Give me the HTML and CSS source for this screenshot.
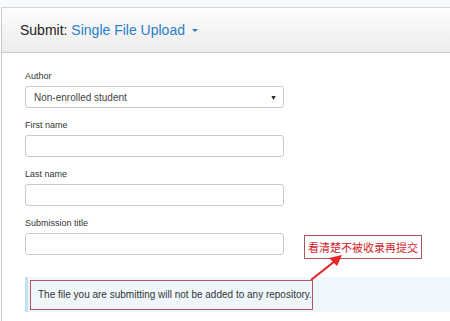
FILE: index.html
```html
<!DOCTYPE html>
<html lang="en">

<head>
    <meta charset="UTF-8">
    <meta name="viewport" content="width=device-width, initial-scale=1.0">
    <title>Submit</title>
    <link rel="stylesheet" href="styles.css">
</head>

<body>
    <div class="topbar"></div>

    <div class="panel">
        <div class="panel-heading">
            Submit: <span class="type">Single File Upload <span class="caret"></span></span>
        </div>

        <div class="panel-body">
            <form class="upload-form">
                <div class="field">
                    <label for="author">Author</label>
                    <div class="select" id="author">
                        <span>Non-enrolled student</span>
                        <span class="select-arrow">&#9660;</span>
                    </div>
                </div>
                <div class="field">
                    <label for="first-name">First name</label>
                    <input type="text" id="first-name">
                </div>
                <div class="field">
                    <label for="last-name">Last name</label>
                    <input type="text" id="last-name">
                </div>
                <div class="field">
                    <label for="title">Submission title</label>
                    <input type="text" id="title">
                </div>
            </form>

            <div class="alert">
                <span class="alert-text">The file you are submitting will not be added to any repository.</span>
            </div>
        </div>

        <!-- 标注 -->
        <div class="note-box">看清楚不被收录再提交</div>
        <div class="note-frame"></div>
        <svg class="note-arrow" width="40" height="30" viewBox="0 0 40 30">
            <line x1="2" y1="28" x2="26" y2="9" stroke="#e3262a" stroke-width="2.2" />
            <polygon points="33,3 20,6 28,14" fill="#e3262a" />
        </svg>
    </div>
</body>

</html>
```

FILE: styles.css
```css
/* 페이지 */
body {
    margin: 0;
    background: #fff;
    font-family: 'Liberation Sans', Arial, sans-serif;
    color: #333;
    overflow: hidden;
}

.topbar {
    height: 7px;
    background: #f6fafc;
}

/* 패널 */
.panel {
    position: relative;
    margin-left: 1px;
    border-left: 1px solid #c8c8c8;
    border-top: 1px solid #d6d6d6;
    height: 320px;
}

.panel-heading {
    height: 44px;
    padding-left: 18px;
    font-size: 14px;
    line-height: 44px;
    color: #222;
    background: linear-gradient(to bottom, #fdfdfd 0%, #ececec 100%);
    border-bottom: 1px solid #c9c9c9;
}

.type {
    color: #2a7fc9;
}

.caret {
    display: inline-block;
    width: 0;
    height: 0;
    margin-left: 3px;
    vertical-align: 3px;
    border-top: 3px solid #2a7fc9;
    border-left: 3px solid transparent;
    border-right: 3px solid transparent;
}

.panel-body {
    padding: 17px 0 0 23px;
}

/* 폼 */
.upload-form {
    width: 259px;
}

.field {
    margin-bottom: 11px;
}

.field:last-child {
    margin-bottom: 0;
}

label {
    display: block;
    font-size: 9px;
    color: #333;
    line-height: 12px;
    margin-bottom: 4px;
}

input,
.select {
    display: block;
    box-sizing: border-box;
    width: 100%;
    height: 22px;
    margin: 0;
    border: 1px solid #c9c9c9;
    border-radius: 3px;
    background: #fff;
}

.select {
    display: flex;
    align-items: center;
    justify-content: space-between;
    padding: 0 6px 0 8px;
    font-size: 10px;
    color: #444;
}

.select-arrow {
    font-size: 7px;
    color: #222;
}

/* 안내 */
.alert {
    margin-top: 22px;
    height: 35px;
    display: flex;
    align-items: center;
    padding-left: 10px;
    background: #f0f7fc;
    border-left: 3px solid #c5e0f2;
}

.alert-text {
    font-size: 10px;
    color: #333;
}

/* 주석 */
.note-box {
    position: absolute;
    left: 302px;
    top: 227px;
    width: 116px;
    height: 22px;
    border: 1px solid #b5565c;
    color: #d2232a;
    font-family: 'Noto Sans CJK SC', sans-serif;
    font-size: 11px;
    line-height: 22px;
    text-align: center;
    white-space: nowrap;
    background: #fff;
}

.note-frame {
    position: absolute;
    left: 28px;
    top: 272px;
    width: 281px;
    height: 28px;
    border: 1px solid #b5565c;
}

.note-arrow {
    position: absolute;
    left: 307px;
    top: 244px;
}
```
